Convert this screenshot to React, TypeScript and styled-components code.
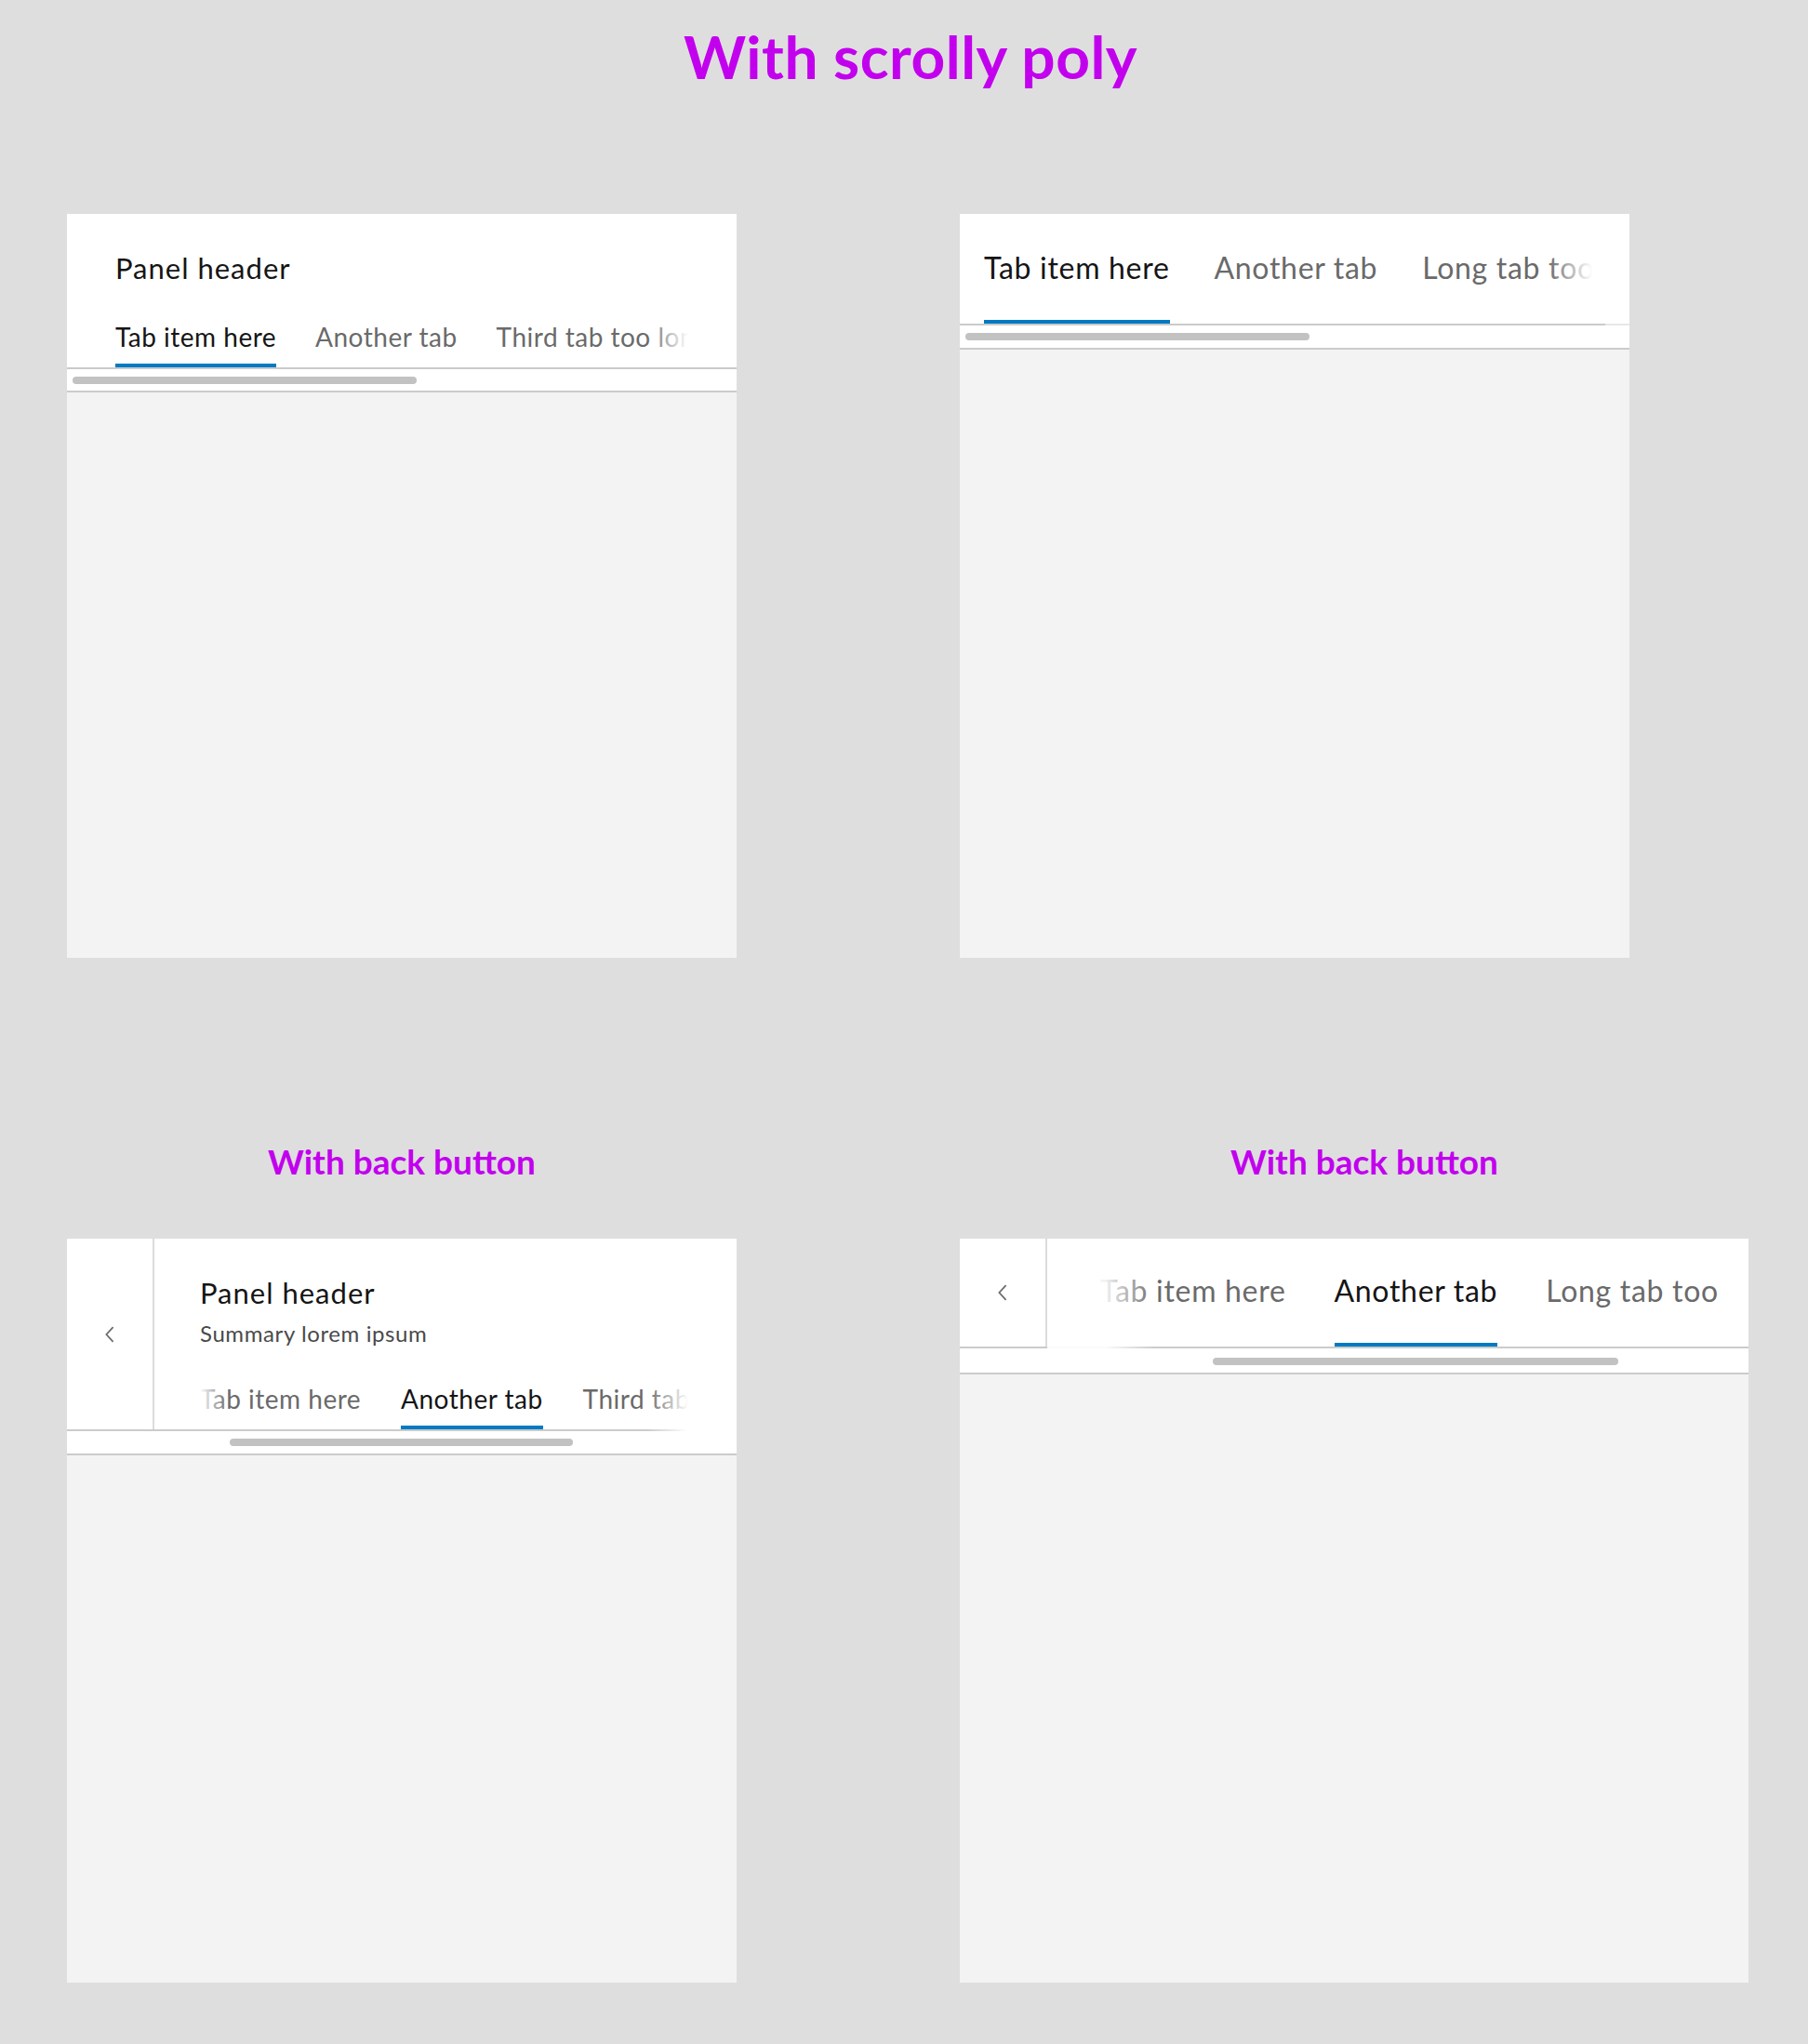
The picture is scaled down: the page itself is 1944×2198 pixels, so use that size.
import * as React from "react";
import styled, { createGlobalStyle } from "styled-components";

const GlobalStyle = createGlobalStyle`
  html,
  body {
    margin: 0;
    padding: 0;
  }
  body {
    background: #dedede;
    color: #151515;
    font-family: Lato, "Noto Sans", "Liberation Sans", sans-serif;
  }
`;

const Page = styled.main`
  box-sizing: border-box;
  width: 1944px;
  min-height: 2198px;
  padding: 29px 0 66px;
`;

const PageTitle = styled.h1`
  margin: 0 0 137px;
  padding-left: 14px;
  color: #c200ee;
  font-size: 64px;
  font-weight: 700;
  line-height: 64px;
  letter-spacing: 0.5px;
  text-align: center;
`;

const Board = styled.div`
  display: grid;
  grid-template-columns: 720px 848px;
  align-items: start;
  column-gap: 240px;
  row-gap: 200px;
  padding-left: 72px;
`;

const Column = styled.section`
  display: flex;
  flex-direction: column;
`;

const SectionTitle = styled.h2<{ $shift?: number }>`
  margin: 0 0 64px;
  padding-left: ${(p) => p.$shift ?? 0}px;
  color: #c200ee;
  font-size: 37px;
  font-weight: 700;
  line-height: 38px;
  text-align: center;
`;

const Panel = styled.div<{ $width: number }>`
  display: flex;
  flex-direction: column;
  width: ${(p) => p.$width}px;
  height: 800px;
  background: #f3f3f3;
`;

const Header = styled.header`
  display: flex;
  background: #fff;
  border-bottom: 2px solid #cbcbcb;
`;

const BackButton = styled.button`
  flex: none;
  display: flex;
  align-items: center;
  justify-content: center;
  width: 94px;
  padding: 0;
  border: 0;
  border-right: 2px solid #dcdcdc;
  background: #fff;
  color: #6a6a6a;
  cursor: pointer;
`;

const HeaderBody = styled.div<{ $padTop: number }>`
  flex: 1;
  min-width: 0;
  display: flex;
  flex-direction: column;
  padding-top: ${(p) => p.$padTop}px;
`;

const Heading = styled.h3<{ $inset: number }>`
  margin: 0;
  padding-left: ${(p) => p.$inset}px;
  color: #151515;
  font-size: 31px;
  font-weight: 400;
  line-height: 40px;
  letter-spacing: 1px;
`;

const Summary = styled.p<{ $inset: number }>`
  margin: 9px 0 0;
  padding-left: ${(p) => p.$inset}px;
  color: #4a4a4a;
  font-size: 24px;
  line-height: 30px;
  letter-spacing: 0.6px;
`;

const TabBar = styled.nav<{ $top: number; $left: number; $right: number }>`
  position: relative;
  margin-top: ${(p) => p.$top}px;
  padding: 0 ${(p) => p.$right}px 0 ${(p) => p.$left}px;
`;

const TabStrip = styled.div<{ $gap: number }>`
  display: flex;
  gap: ${(p) => p.$gap}px;
  overflow: hidden;
  white-space: nowrap;
`;

const Tab = styled.button<{ $active?: boolean; $size: number; $padBottom: number }>`
  flex: none;
  padding: 0 0 ${(p) => p.$padBottom}px;
  border: 0;
  border-bottom: 4px solid ${(p) => (p.$active ? "#007ac2" : "transparent")};
  background: none;
  color: ${(p) => (p.$active ? "#151515" : "#6a6a6a")};
  font-family: inherit;
  font-size: ${(p) => p.$size}px;
  line-height: ${(p) => p.$size + 12}px;
  letter-spacing: ${(p) => (p.$size > 30 ? 0.7 : 0.5)}px;
  cursor: pointer;
`;

// white wash over the clipped ends of the strip
const EdgeFade = styled.div<{
  $side: "left" | "right";
  $offset: number;
  $width: number;
  $solid: number;
  $strength?: number;
  $overRule?: boolean;
}>`
  position: absolute;
  top: 0;
  bottom: ${(p) => (p.$overRule ? -2 : 0)}px;
  ${(p) => p.$side}: ${(p) => p.$offset}px;
  width: ${(p) => p.$width}px;
  pointer-events: none;
  background: linear-gradient(
    to ${(p) => (p.$side === "left" ? "left" : "right")},
    rgba(255, 255, 255, 0) 0,
    rgba(255, 255, 255, ${(p) => p.$strength ?? 1}) ${(p) => p.$width - p.$solid}px,
    rgba(255, 255, 255, ${(p) => p.$strength ?? 1}) 100%
  );
`;

const ScrollTrack = styled.div<{ $height: number; $pad: number }>`
  height: ${(p) => p.$height - p.$pad}px;
  padding-top: ${(p) => p.$pad}px;
  background: #fff;
  border-bottom: 2px solid #cbcbcb;
`;

const ScrollThumb = styled.div`
  height: 8px;
  border-radius: 4px;
  background: #c2c2c2;
`;

const ChevronLeft = () => (
  <svg width="10" height="18" viewBox="0 0 10 18" fill="none" aria-hidden="true">
    <path d="M8.6 1.2 1.4 9l7.2 7.8" stroke="currentColor" strokeWidth="1.7" />
  </svg>
);

interface FadeSpec {
  side: "left" | "right";
  offset: number;
  width: number;
  solid: number;
  strength?: number;
  overRule?: boolean;
}

interface TabbedPanelProps {
  width: number;
  back?: boolean;
  heading?: string;
  summary?: string;
  padTop: number;
  inset: number;
  tabs: string[];
  active: number;
  tabSize: number;
  tabGap: number;
  tabTop: number;
  tabPadBottom: number;
  stripRight: number;
  fades: FadeSpec[];
  track: { height: number; pad: number; left: number; width: number };
}

const TabbedPanel: React.FC<TabbedPanelProps> = (p) => (
  <Panel $width={p.width}>
    <Header>
      {p.back && (
        <BackButton aria-label="Back">
          <ChevronLeft />
        </BackButton>
      )}
      <HeaderBody $padTop={p.padTop}>
        {p.heading && <Heading $inset={p.inset}>{p.heading}</Heading>}
        {p.summary && <Summary $inset={p.inset}>{p.summary}</Summary>}
        <TabBar $top={p.tabTop} $left={p.inset} $right={p.stripRight}>
          <TabStrip $gap={p.tabGap}>
            {p.tabs.map((t, i) => (
              <Tab key={t} $active={i === p.active} $size={p.tabSize} $padBottom={p.tabPadBottom}>
                {t}
              </Tab>
            ))}
          </TabStrip>
          {p.fades.map((f, i) => (
            <EdgeFade
              key={i}
              $side={f.side}
              $offset={f.offset}
              $width={f.width}
              $solid={f.solid}
              $strength={f.strength}
              $overRule={f.overRule}
            />
          ))}
        </TabBar>
      </HeaderBody>
    </Header>
    <ScrollTrack $height={p.track.height} $pad={p.track.pad}>
      <ScrollThumb style={{ marginLeft: p.track.left, width: p.track.width }} />
    </ScrollTrack>
  </Panel>
);

export default function App() {
  return (
    <Page>
      <GlobalStyle />
      <PageTitle>With scrolly poly</PageTitle>
      <Board>
        <TabbedPanel
          width={720}
          heading="Panel header"
          padTop={38}
          inset={52}
          tabs={["Tab item here", "Another tab", "Third tab too long"]}
          active={0}
          tabSize={28}
          tabGap={42}
          tabTop={34}
          tabPadBottom={9}
          stripRight={52}
          fades={[{ side: "right", offset: 52, width: 44, solid: 0 }]}
          track={{ height: 23, pad: 8, left: 6, width: 370 }}
        />
        <TabbedPanel
          width={720}
          padTop={36}
          inset={26}
          tabs={["Tab item here", "Another tab", "Long tab too long"]}
          active={0}
          tabSize={32}
          tabGap={48}
          tabTop={0}
          tabPadBottom={34}
          stripRight={40}
          fades={[
            { side: "right", offset: 40, width: 48, solid: 0 },
            { side: "right", offset: 0, width: 26, solid: 26, strength: 0.55, overRule: true },
          ]}
          track={{ height: 24, pad: 8, left: 6, width: 370 }}
        />
        <Column>
          <SectionTitle>With back button</SectionTitle>
          <TabbedPanel
            width={720}
            back
            heading="Panel header"
            summary="Summary lorem ipsum"
            padTop={38}
            inset={49}
            tabs={["Tab item here", "Another tab", "Third tab too long"]}
            active={1}
            tabSize={28}
            tabGap={43}
            tabTop={35}
            tabPadBottom={9}
            stripRight={52}
            fades={[
              { side: "left", offset: 49, width: 30, solid: 0 },
              { side: "right", offset: 0, width: 96, solid: 52, overRule: true },
            ]}
            track={{ height: 24, pad: 8, left: 175, width: 369 }}
          />
        </Column>
        <Column>
          <SectionTitle $shift={22}>With back button</SectionTitle>
          <TabbedPanel
            width={848}
            back
            padTop={34}
            inset={57}
            tabs={["Tab item here", "Another tab", "Long tab too"]}
            active={1}
            tabSize={32}
            tabGap={52}
            tabTop={0}
            tabPadBottom={34}
            stripRight={0}
            fades={[{ side: "left", offset: 0, width: 116, solid: 62, strength: 0.92, overRule: true }]}
            track={{ height: 26, pad: 10, left: 272, width: 436 }}
          />
        </Column>
      </Board>
    </Page>
  );
}
